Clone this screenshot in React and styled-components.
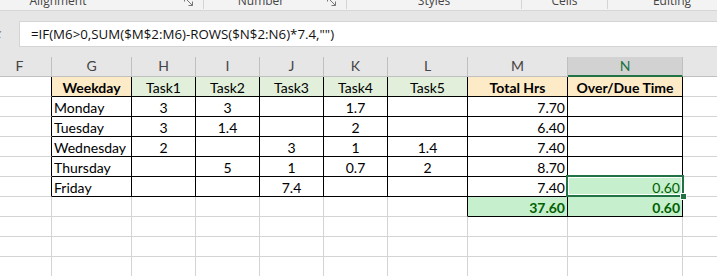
import React from "react";
import styled, { createGlobalStyle } from "styled-components";

const GlobalStyle = createGlobalStyle`
  html, body {
    margin: 0;
    padding: 0;
    background: #fff;
    overflow: hidden;
  }
`;

const CELL_FONT = `"Lato", "Liberation Sans", sans-serif`;
const UI_FONT = `"Open Sans", "Noto Sans", sans-serif`;

const PEACH = "#fdebc8";
const MINT = "#e2efda";
const GOOD = "#c6efce";
const GOOD_TEXT = "#006100";
const EXCEL_GREEN = "#217346";

const Window = styled.div`
  width: 717px;
  height: 276px;
  overflow: hidden;
  display: flex;
  flex-direction: column;
  background: #fff;
`;

// ribbon (only the bottom strip of group labels is visible)

const Ribbon = styled.div`
  display: flex;
  flex-shrink: 0;
  height: 10px;
  background: #f3f3f3;
  border-bottom: 1px solid #d6d6d6;
  overflow: hidden;
`;

const Group = styled.div`
  display: flex;
  flex-shrink: 0;
  width: ${(p) => p.$w}px;
  margin-left: ${(p) => p.$ml || 0}px;
  border-right: 1px solid #d4d4d4;
  height: 9px;
`;

const GroupLabel = styled.div`
  flex: 1;
  text-align: center;
  font-family: ${UI_FONT};
  font-size: 12px;
  line-height: 12px;
  margin-top: -5px;
  color: #444;
  white-space: nowrap;
`;

const Launcher = styled.div`
  width: 28px;
  display: flex;
  justify-content: center;
  svg {
    margin-top: -3px;
  }
`;

const LauncherIcon = () => (
  <svg width="10" height="10" viewBox="0 0 10 10" fill="none" stroke="#777" strokeWidth="1">
    <path d="M0.5 0.5H4.5M0.5 0.5V4.5" />
    <path d="M3 3L8.5 8.5" />
    <path d="M8.5 4.5V8.5H4.5" />
  </svg>
);

// formula bar

const FormulaArea = styled.div`
  display: flex;
  flex-shrink: 0;
  background: #e6e6e6;
  padding: 10px 0;
`;

const NameTail = styled.div`
  width: 19px;
  overflow: hidden;
  display: flex;
  align-items: center;
  span {
    margin-left: -9px;
    font-family: "Liberation Serif", serif;
    font-style: italic;
    font-size: 14px;
    color: #777;
  }
`;

const FormulaInput = styled.div`
  flex: 1;
  height: 24px;
  background: #fff;
  border: 1px solid #d4d4d4;
  border-right: none;
  padding-left: 11px;
  display: flex;
  align-items: center;
  font-family: ${UI_FONT};
  font-size: 13.3px;
  color: #111;
  white-space: nowrap;
`;

// sheet grid

const Sheet = styled.div`
  display: grid;
  grid-template-columns: 64px 80px 64px 64px 64px 64px 80px 100px 115px 200px;
  grid-auto-rows: 20px;
  margin-left: -12px;
`;

const ColHeader = styled.div`
  box-sizing: border-box;
  background: ${(p) => (p.$active ? "#d2d2d2" : "#e6e6e6")};
  border-right: 1px solid ${(p) => (p.$last ? "#e6e6e6" : "#c0c0c0")};
  border-bottom: ${(p) => (p.$active ? `2px solid ${EXCEL_GREEN}` : "1px solid #c0c0c0")};
  display: flex;
  align-items: flex-end;
  justify-content: center;
  padding-bottom: ${(p) => (p.$active ? 1 : 2)}px;
  font-family: ${CELL_FONT};
  font-size: 14px;
  line-height: 17px;
  color: ${(p) => (p.$active ? EXCEL_GREEN : "#444")};
`;

const Cell = styled.div`
  position: relative;
  box-sizing: border-box;
  border-right: 1px solid ${(p) => (p.$br ? "#000" : "#d4d4d4")};
  border-bottom: 1px solid ${(p) => (p.$bb ? "#000" : "#d4d4d4")};
  background: ${(p) => p.$fill || "#fff"};
  display: flex;
  align-items: flex-end;
  justify-content: ${(p) => p.$align};
  padding: 0 2px;
  font-family: ${CELL_FONT};
  font-size: 14px;
  line-height: 17px;
  font-weight: ${(p) => (p.$bold ? 700 : 400)};
  color: ${(p) => p.$color || "#000"};
  white-space: nowrap;
`;

const Selection = styled.div`
  position: absolute;
  z-index: 2;
  left: -2px;
  top: -2px;
  width: 118px;
  height: 22px;
  box-sizing: border-box;
  border: 2px solid ${EXCEL_GREEN};
  box-shadow: inset 0 0 0 1px #fff;
  pointer-events: none;
`;

const FillHandle = styled.div`
  position: absolute;
  left: 112px;
  top: 16px;
  width: 7px;
  height: 7px;
  box-sizing: border-box;
  background: ${EXCEL_GREEN};
  border: 1px solid #fff;
`;

const groups = [
  { label: "Alignment", w: 262, ml: -59, launcher: true },
  { label: "Number", w: 142, launcher: true },
  { label: "Styles", w: 174 },
  { label: "Cells", w: 85 },
  { label: "Editing", w: 128 },
];

const letters = ["F", "G", "H", "I", "J", "K", "L", "M", "N", ""];

const rows = [
  ["", "Weekday", "Task1", "Task2", "Task3", "Task4", "Task5", "Total Hrs", "Over/Due Time", ""],
  ["", "Monday", "3", "3", "", "1.7", "", "7.70", "", ""],
  ["", "Tuesday", "3", "1.4", "", "2", "", "6.40", "", ""],
  ["", "Wednesday", "2", "", "3", "1", "1.4", "7.40", "", ""],
  ["", "Thursday", "", "5", "1", "0.7", "2", "8.70", "", ""],
  ["", "Friday", "", "", "7.4", "", "", "7.40", "0.60", ""],
  ["", "", "", "", "", "", "", "37.60", "0.60", ""],
  ["", "", "", "", "", "", "", "", "", ""],
  ["", "", "", "", "", "", "", "", "", ""],
  ["", "", "", "", "", "", "", "", "", ""],
];

// r is 0-based row of data (0 = table header), c is column index (0 = F)
const inTable = (r, c) =>
  (c >= 1 && c <= 6 && r >= 0 && r <= 5) || (c >= 7 && c <= 8 && r >= 0 && r <= 6);

const cellProps = (r, c) => {
  let align = "flex-start";
  if (r === 0 || (c >= 2 && c <= 6)) align = "center";
  else if (c >= 7) align = "flex-end";

  let fill;
  if (r === 0 && (c === 1 || c === 7 || c === 8)) fill = PEACH;
  else if (r === 0 && c >= 2 && c <= 6) fill = MINT;
  else if ((r === 6 && (c === 7 || c === 8)) || (r === 5 && c === 8)) fill = GOOD;

  const bold = (r === 0 && (c === 1 || c === 7 || c === 8)) || r === 6;
  const color = fill === GOOD ? GOOD_TEXT : undefined;

  return {
    $align: align,
    $fill: fill,
    $bold: bold,
    $color: color,
    $br: inTable(r, c) || inTable(r, c + 1),
    $bb: inTable(r, c) || inTable(r + 1, c),
  };
};

export default function App() {
  return (
    <>
      <GlobalStyle />
      <Window>
        <Ribbon>
          {groups.map((g) => (
            <Group key={g.label} $w={g.w} $ml={g.ml}>
              <GroupLabel>{g.label}</GroupLabel>
              {g.launcher && (
                <Launcher>
                  <LauncherIcon />
                </Launcher>
              )}
            </Group>
          ))}
        </Ribbon>

        <FormulaArea>
          <NameTail>
            <span>fx</span>
          </NameTail>
          <FormulaInput>=IF(M6&gt;0,SUM($M$2:M6)-ROWS($N$2:N6)*7.4,"")</FormulaInput>
        </FormulaArea>

        <Sheet>
          {letters.map((l, c) => (
            <ColHeader key={"h" + c} $active={l === "N"} $last={c === letters.length - 1}>
              {l}
            </ColHeader>
          ))}
          {rows.map((row, r) =>
            row.map((val, c) => (
              <Cell key={r + "-" + c} {...cellProps(r, c)}>
                {val}
                {r === 5 && c === 8 && (
                  <Selection>
                    <FillHandle />
                  </Selection>
                )}
              </Cell>
            ))
          )}
        </Sheet>
      </Window>
    </>
  );
}
